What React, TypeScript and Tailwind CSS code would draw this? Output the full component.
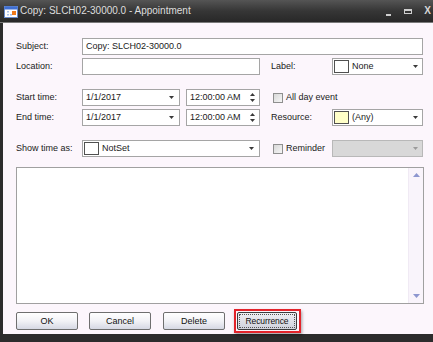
import React from "react";

function Arrow() {
  return (
    <svg width="5" height="3" viewBox="0 0 5 3" className="shrink-0">
      <polygon points="0,0 5,0 2.5,3" fill="#3a3a3a" />
    </svg>
  );
}

function Spinner() {
  return (
    <svg width="5" height="9" viewBox="0 0 5 9" className="shrink-0">
      <polygon points="2.5,0 5,3 0,3" fill="#3a3a3a" />
      <polygon points="0,6 5,6 2.5,9" fill="#3a3a3a" />
    </svg>
  );
}

function Swatch({ color }: { color: string }) {
  return <div className="w-[15px] h-[13px] ml-[1px] border border-[#505050] shrink-0" style={{ background: color }} />;
}

function Checkbox() {
  return <div className="w-[10px] h-[10px] border border-[#8f8f8f] bg-linear-to-br from-[#d8d8d8] to-[#f6f6f6] shrink-0" />;
}

function Label({ children, w }: { children: React.ReactNode; w: string }) {
  return <div className={`${w} shrink-0 text-[#1a1a1a]`}>{children}</div>;
}

function Btn({ children }: { children: React.ReactNode }) {
  return (
    <div className="w-[62px] h-[18px] rounded-[2px] border border-[#6f6f6f] bg-linear-to-b from-[#ffffff] via-[#f2f2f6] to-[#d6d8e4] flex items-center justify-center text-[#111] shrink-0">
      {children}
    </div>
  );
}

export default function App() {
  return (
    <div className="w-[433px] h-[342px] overflow-hidden flex flex-col bg-[#2c2c2c] font-['Liberation_Sans',Arial,sans-serif] text-[9px] leading-none">
      {/* title bar */}
      <div className="h-[23px] shrink-0 flex items-center bg-linear-to-b from-[#555555] via-[#363636] to-[#282828] border-b border-[#7a7a7a]">
        <svg width="14" height="12" viewBox="0 0 14 12" className="ml-[4px] mt-[1px]">
          <rect x="0.5" y="0.5" width="13" height="11" fill="#ffffff" stroke="#6a8ccc" />
          <rect x="0.5" y="0.5" width="13" height="3" fill="#3f6fd4" />
          <rect x="3" y="5" width="2" height="1.5" fill="#a8c0ea" />
          <rect x="3" y="8" width="2" height="1.5" fill="#a8c0ea" />
          <rect x="6" y="8" width="2" height="1.5" fill="#a8c0ea" />
          <rect x="8" y="5" width="4" height="4" fill="#f07a1a" />
        </svg>
        <div className="ml-[2px] text-[10px] text-[#dedede]">Copy: SLCH02-30000.0 - Appointment</div>
        <div className="flex-1" />
        <div className="w-[5px] h-[2px] bg-[#cfcfcf] mt-[7px] mr-[13px]" />
        <div className="w-[8px] h-[5px] border border-[#cfcfcf] border-t-[2px] mr-[12px]" />
        <div className="text-[#d6d6d6] text-[10px] font-bold mr-[2px]">X</div>
      </div>

      {/* body */}
      <div className="flex-1 ml-[3px] bg-[#fcf6fc] pt-[15px] pl-[13px] pr-[10px] flex flex-col text-[#1a1a1a]">
        {/* Subject */}
        <div className="flex items-center h-[17px]">
          <Label w="w-[66px]">Subject:</Label>
          <div className="w-[341px] h-[17px] border border-[#a5a5a5] bg-white flex items-center px-[3px]">Copy: SLCH02-30000.0</div>
        </div>
        {/* Location */}
        <div className="flex items-center h-[17px] mt-[3px]">
          <Label w="w-[66px]">Location:</Label>
          <div className="w-[178px] h-[17px] border border-[#a5a5a5] bg-white" />
          <div className="w-[11px]" />
          <Label w="w-[61px]">Label:</Label>
          <div className="w-[91px] h-[17px] border border-[#a5a5a5] bg-white flex items-center pr-[4px]">
            <Swatch color="#ffffff" />
            <div className="ml-[3px] flex-1">None</div>
            <Arrow />
          </div>
        </div>
        {/* Start time */}
        <div className="flex items-center h-[17px] mt-[14px]">
          <Label w="w-[66px]">Start time:</Label>
          <div className="w-[98px] h-[17px] border border-[#a5a5a5] bg-white flex items-center px-[3px] pr-[5px]">
            <div className="flex-1">1/1/2017</div>
            <Arrow />
          </div>
          <div className="w-[6px]" />
          <div className="w-[74px] h-[17px] border border-[#a5a5a5] bg-white flex items-center px-[3px] pr-[4px]">
            <div className="flex-1">12:00:00 AM</div>
            <Spinner />
          </div>
          <div className="w-[13px]" />
          <Checkbox />
          <div className="ml-[3px]">All day event</div>
        </div>
        {/* End time */}
        <div className="flex items-center h-[17px] mt-[3px]">
          <Label w="w-[66px]">End time:</Label>
          <div className="w-[98px] h-[17px] border border-[#a5a5a5] bg-white flex items-center px-[3px] pr-[5px]">
            <div className="flex-1">1/1/2017</div>
            <Arrow />
          </div>
          <div className="w-[6px]" />
          <div className="w-[74px] h-[17px] border border-[#a5a5a5] bg-white flex items-center px-[3px] pr-[4px]">
            <div className="flex-1">12:00:00 AM</div>
            <Spinner />
          </div>
          <div className="w-[11px]" />
          <Label w="w-[61px]">Resource:</Label>
          <div className="w-[91px] h-[17px] border border-[#a5a5a5] bg-white flex items-center pr-[4px]">
            <Swatch color="#ffffc8" />
            <div className="ml-[3px] flex-1">(Any)</div>
            <Arrow />
          </div>
        </div>
        {/* Show time as */}
        <div className="flex items-center h-[17px] mt-[14px]">
          <Label w="w-[66px]">Show time as:</Label>
          <div className="w-[178px] h-[17px] border border-[#a5a5a5] bg-white flex items-center pr-[5px]">
            <Swatch color="#ffffff" />
            <div className="ml-[3px] flex-1">NotSet</div>
            <Arrow />
          </div>
          <div className="w-[13px]" />
          <Checkbox />
          <div className="ml-[3px] w-[46px]">Reminder</div>
          <div className="w-[91px] h-[17px] border border-[#b8b8b8] bg-[#d8d8d8] flex items-center justify-end pr-[4px]">
            <svg width="5" height="3" viewBox="0 0 5 3">
              <polygon points="0,0 5,0 2.5,3" fill="#9a9a9a" />
            </svg>
          </div>
        </div>
        {/* Notes */}
        <div className="w-[408px] h-[137px] mt-[10px] border border-[#a0a0a0] bg-white flex justify-end">
          <div className="w-[15px] h-full bg-[#f9f4fb] border-l border-[#f0eaf4] flex flex-col items-center justify-between py-[5px]">
            <svg width="7" height="4" viewBox="0 0 7 4">
              <polygon points="3.5,0 7,4 0,4" fill="#8d96cf" />
            </svg>
            <svg width="7" height="4" viewBox="0 0 7 4">
              <polygon points="0,0 7,0 3.5,4" fill="#8d96cf" />
            </svg>
          </div>
        </div>
        {/* Buttons */}
        <div className="flex items-center mt-[8px] h-[18px]">
          <Btn>OK</Btn>
          <div className="w-[11px]" />
          <Btn>Cancel</Btn>
          <div className="w-[12px]" />
          <Btn>Delete</Btn>
          <div className="w-[12px]" />
          <div className="relative">
            <div className="w-[60px] h-[18px] rounded-[2px] border border-[#3c3c3c] bg-linear-to-b from-[#eeeef2] to-[#cfd1dc] flex items-center justify-center p-[1px]">
              <div className="w-full h-full border border-dotted border-[#555] flex items-center justify-center text-[#111] text-[8.5px] tracking-[-0.1px]">Recurrence</div>
            </div>
            <div className="absolute -left-[3px] -top-[3px] -right-[4px] -bottom-[3px] border-2 border-[#e3242b] shadow-[1px_2px_3px_rgba(0,0,0,0.35)]" />
          </div>
        </div>
      </div>
      <div className="h-[8px] shrink-0 bg-[#2c2c2c]" />
    </div>
  );
}
